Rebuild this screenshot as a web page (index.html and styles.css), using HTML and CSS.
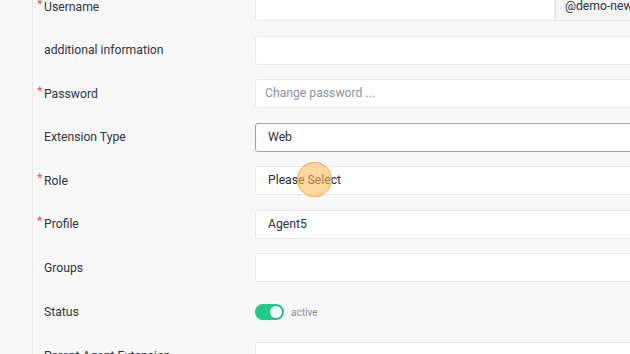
FILE: index.html
```html
<!DOCTYPE html>
<html lang="en">
<head>
<meta charset="utf-8">
<title>Extension</title>
<link rel="stylesheet" href="styles.css">
</head>
<body>
<div class="page">
  <form class="form">
    <div class="row">
      <label class="label"><span class="star">*</span>Username</label>
      <div class="group">
        <div class="field"></div>
        <div class="addon">@demo-new.example</div>
      </div>
    </div>
    <div class="row">
      <label class="label"><span class="star"></span>additional information</label>
      <div class="field"></div>
    </div>
    <div class="row">
      <label class="label"><span class="star">*</span>Password</label>
      <div class="field placeholder pw">Change password ...</div>
    </div>
    <div class="row">
      <label class="label"><span class="star"></span>Extension Type</label>
      <div class="field select focus">Web</div>
    </div>
    <div class="row">
      <label class="label"><span class="star">*</span>Role</label>
      <div class="field select">Please Select</div>
    </div>
    <div class="row">
      <label class="label"><span class="star">*</span>Profile</label>
      <div class="field select">Agent5</div>
    </div>
    <div class="row">
      <label class="label"><span class="star"></span>Groups</label>
      <div class="field"></div>
    </div>
    <div class="row status-row">
      <label class="label"><span class="star"></span>Status</label>
      <div class="status">
        <span class="toggle"><span class="knob"></span></span>
        <span class="status-text">active</span>
      </div>
    </div>
    <div class="row">
      <label class="label"><span class="star"></span>Parent Agent Extension</label>
      <div class="field"></div>
    </div>
  </form>
</div>
<div class="cursor"></div>
</body>
</html>
```
FILE: styles.css
```css
html, body {
  margin: 0;
  padding: 0;
  overflow: hidden;
  background: #f8f8f8;
}
body {
  width: 630px;
  height: 354px;
  position: relative;
  font-family: Roboto, "Liberation Sans", sans-serif;
  color: #2f3540;
}
.page {
  margin-left: 32px;
  border-left: 1px solid #e8e8e8;
  padding-left: 4px;
  height: 400px;
}
.form {
  margin-top: -15.25px;
  width: 800px;
}
.row {
  display: grid;
  grid-template-columns: 218px 1fr;
  align-items: center;
  height: 43.5px;
}
.label {
  font-size: 12.2px;
  display: flex;
  align-items: flex-start;
  color: #2f3540;
}
.star {
  display: inline-block;
  width: 7px;
  color: #d9597a;
  font-size: 13px;
  line-height: 13px;
  margin-top: -3px;
}
.group {
  display: flex;
}
.group .field {
  width: 300px;
  border-radius: 3px 0 0 3px;
}
.addon {
  height: 29px;
  box-sizing: border-box;
  border: 1px solid #e6e6e6;
  background: #f3f3f3;
  padding: 0 9px;
  font-size: 12.2px;
  line-height: 27px;
  color: #2f3540;
  white-space: nowrap;
}
.field {
  height: 29px;
  box-sizing: border-box;
  background: #fff;
  border: 1px solid #e8e8e8;
  border-radius: 3px;
  padding: 0 12px;
  font-size: 12.2px;
  line-height: 27px;
  color: #2b2f36;
}
.placeholder {
  color: #8c94a0;
}
.pw {
  padding-left: 9px;
}
.focus {
  border-color: #a3a3a3;
}
.status-row {
  height: 45px;
  align-items: start;
  padding-top: 15px;
  box-sizing: border-box;
}
.status-row .label {
  line-height: 16px;
}
.status {
  display: flex;
  align-items: center;
  gap: 7px;
}
.toggle {
  width: 29px;
  height: 16px;
  border-radius: 8px;
  background: #1dcc85;
  display: flex;
  justify-content: flex-end;
  align-items: center;
  box-sizing: border-box;
  padding: 1px;
}
.knob {
  width: 14px;
  height: 14px;
  border-radius: 50%;
  background: #fff;
  box-sizing: border-box;
  border: 1px solid #16b373;
}
.status-text {
  font-size: 10px;
  color: #8a8f98;
}
.cursor {
  position: absolute;
  left: 297px;
  top: 162px;
  width: 35px;
  height: 35px;
  border-radius: 50%;
  box-sizing: border-box;
  background: rgba(255, 186, 80, 0.55);
  border: 1px solid rgba(236, 160, 60, 0.75);
}
```
